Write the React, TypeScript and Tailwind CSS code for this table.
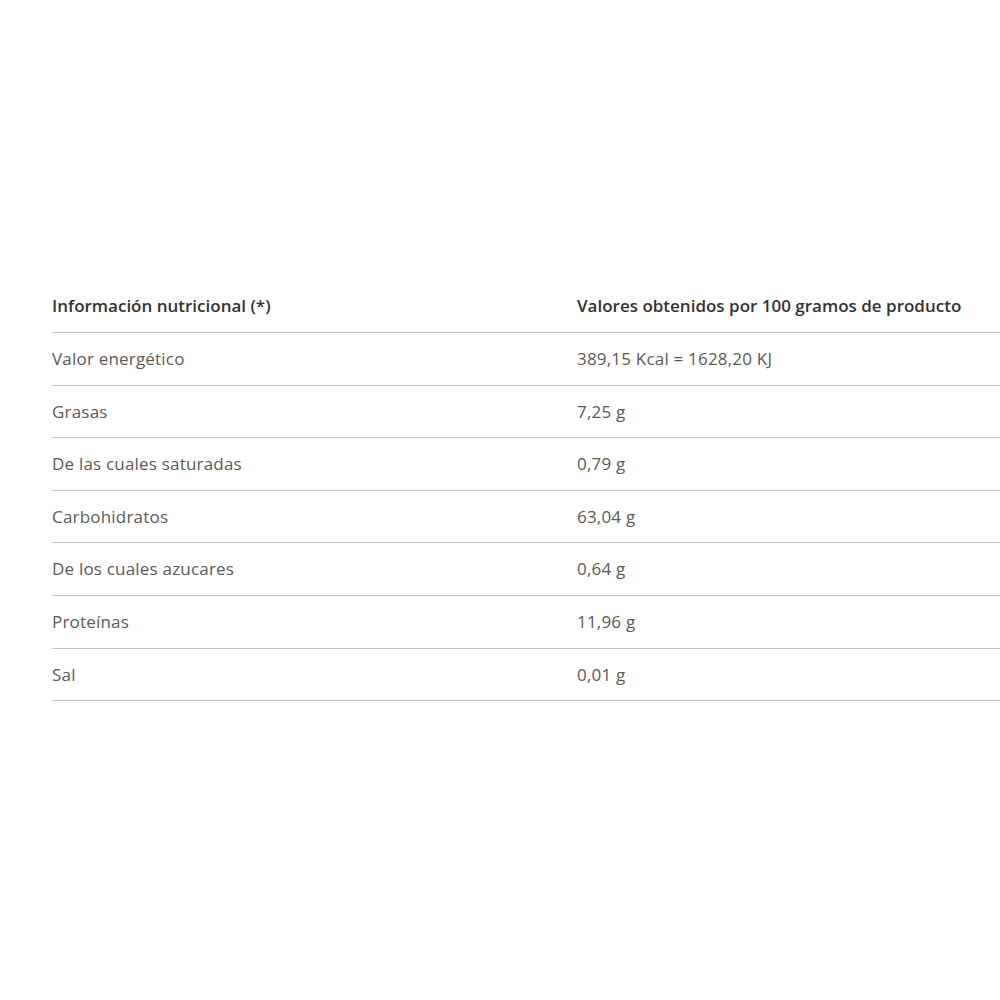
const rows: [string, string][] = [
  ["Valor energético", "389,15 Kcal = 1628,20 KJ"],
  ["Grasas", "7,25 g"],
  ["De las cuales saturadas", "0,79 g"],
  ["Carbohidratos", "63,04 g"],
  ["De los cuales azucares", "0,64 g"],
  ["Proteínas", "11,96 g"],
  ["Sal", "0,01 g"],
];

export default function App() {
  return (
    <div className="w-[1000px] h-[1000px] bg-white overflow-hidden font-['Open_Sans',sans-serif]">
      <div className="pt-[280px] pl-[52px]">
        <div className="w-[1050px]">
          <div className="grid grid-cols-[525px_1fr] h-[53px] items-center border-b border-[#c4c4c4] text-[17px] font-semibold text-[#333333]">
            <span>Información nutricional (*)</span>
            <span>Valores obtenidos por 100 gramos de producto</span>
          </div>
          {rows.map(([label, value]) => (
            <div
              key={label}
              className="grid grid-cols-[525px_1fr] h-[52.6px] items-center border-b border-[#c4c4c4] text-[17px] tracking-[0.2px] text-[#5a5a5a]"
            >
              <span>{label}</span>
              <span>{value}</span>
            </div>
          ))}
        </div>
      </div>
    </div>
  );
}
